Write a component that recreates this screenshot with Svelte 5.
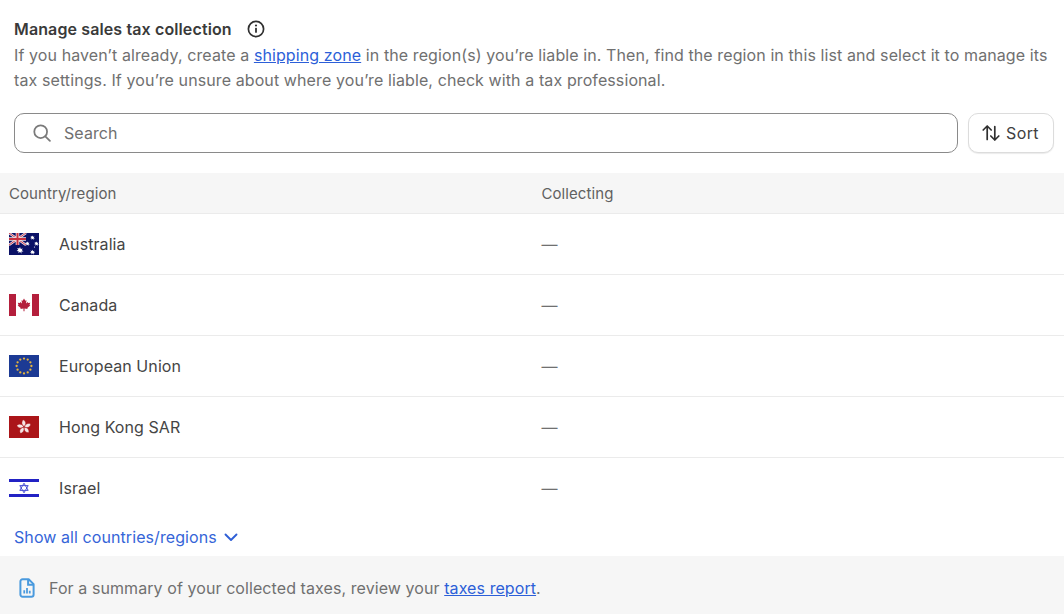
<script lang="ts">
    const regions = ["Australia", "Canada", "European Union", "Hong Kong SAR", "Israel"];
    // 12 stars on the EU circle
    const euStars = Array.from({ length: 12 }, (_, i) => ({
        x: 15 + 7.4 * Math.sin((i * Math.PI) / 6),
        y: 11 - 7.4 * Math.cos((i * Math.PI) / 6),
    }));
    const petals = [0, 72, 144, 216, 288];
    const star = "M0-2.6l.7 1.7 1.8-.5-1 1.5 1.5 1.1-1.8.2.1 1.8L0 1.5l-1.3 1.3.1-1.8-1.8-.2 1.5-1.1-1-1.5 1.8.5z";
    const auStars = [
        { x: 11, y: 17, s: 1.15 },
        { x: 23.5, y: 4.5, s: 0.8 },
        { x: 18.5, y: 10.5, s: 0.75 },
        { x: 27.5, y: 10.5, s: 0.8 },
        { x: 23.5, y: 19, s: 0.85 },
    ];
</script>

<main class="page">
    <section class="intro">
        <div class="title">
            <h2>Manage sales tax collection</h2>
            <svg class="info" viewBox="0 0 18 18" width="18" height="18" aria-hidden="true">
                <circle cx="9" cy="9" r="7.6" fill="none" stroke="#303030" stroke-width="1.7" />
                <rect x="8.1" y="7.8" width="1.8" height="5" rx="0.6" fill="#303030" />
                <circle cx="9" cy="5.5" r="1.1" fill="#303030" />
            </svg>
        </div>
        <p>
            If you haven’t already, create a <a href="#zone">shipping zone</a> in the region(s) you’re liable in. Then, find the region in this list and select it to manage its tax settings. If you’re unsure about where you’re liable, check with a tax professional.
        </p>
    </section>

    <div class="tools">
        <label class="search">
            <svg viewBox="0 0 20 20" width="22" height="22" aria-hidden="true">
                <circle cx="8.8" cy="8.8" r="5.8" fill="none" stroke="#7a7a7a" stroke-width="1.6" />
                <path d="M13 13l4.2 4.2" stroke="#7a7a7a" stroke-width="1.6" stroke-linecap="round" />
            </svg>
            <span>Search</span>
        </label>
        <button class="sort">
            <svg viewBox="0 0 20 20" width="20" height="20" aria-hidden="true">
                <path d="M6.2 16.5V3M2.2 7l4-4 4 4M13.8 3.5V17M9.8 13l4 4 4-4" fill="none" stroke="#303030" stroke-width="1.7" stroke-linecap="round" stroke-linejoin="round" />
            </svg>
            Sort
        </button>
    </div>

    <div class="table">
        <div class="row head">
            <span>Country/region</span>
            <span>Collecting</span>
        </div>
        {#each regions as region, i}
            <div class="row">
                <span class="region">
                    <svg class="flag" viewBox="0 0 30 22" width="30" height="22" aria-hidden="true">
                        {#if i === 0}
                            <rect width="30" height="22" fill="#0a1166" />
                            <path d="M0 0l17 12M17 0L0 12" stroke="#e8dfe6" stroke-width="2.4" />
                            <path d="M0 0l17 12M17 0L0 12" stroke="#c8303f" stroke-width="0.9" />
                            <path d="M8.5 0v12M0 6h17" stroke="#f2e6e8" stroke-width="3.6" />
                            <path d="M8.5 0v12M0 6h17" stroke="#c8303f" stroke-width="2" />
                            {#each auStars as s}
                                <path d={star} fill="#fff" transform="translate({s.x} {s.y}) scale({s.s})" />
                            {/each}
                            <circle cx="25.5" cy="14" r="0.6" fill="#fff" />
                        {:else if i === 1}
                            <rect width="30" height="22" fill="#fff" />
                            <rect width="7" height="22" fill="#b41f3c" />
                            <rect x="23" width="7" height="22" fill="#b41f3c" />
                            <path d="M15 4.5l1.3 2.2 1.2-.5-.5 3.3 1.7-1.6.5 1.2 2-.3-.7 2.1.8.5-3 2.5.3 1.1-3.1-.4v2.6h-1v-2.6l-3.1.4.3-1.1-3-2.5.8-.5-.7-2.1 2 .3.5-1.2 1.7 1.6-.5-3.3 1.2.5z" fill="#b41f3c" />
                        {:else if i === 2}
                            <rect width="30" height="22" fill="#1c3a94" />
                            {#each euStars as s}
                                <circle cx={s.x} cy={s.y} r="1.15" fill="#e8b53c" />
                            {/each}
                        {:else if i === 3}
                            <rect width="30" height="22" fill="#ab1519" />
                            {#each petals as a}
                                <path d="M15.3 10.4c-2.6-1-3.2-4.2-1.2-6.6 2.4.8 3.6 3.8 1.2 6.6z" fill="#f6e6e6" stroke="#ab1519" stroke-width="0.4" transform="rotate({a} 15 11)" />
                            {/each}
                        {:else}
                            <rect width="30" height="22" fill="#fff" />
                            <rect y="2" width="30" height="3" fill="#2222c4" />
                            <rect y="17" width="30" height="3" fill="#2222c4" />
                            <path d="M15 6.2l4.2 7.2h-8.4zM15 15.8l-4.2-7.2h8.4z" fill="none" stroke="#4a52d4" stroke-width="1" />
                        {/if}
                    </svg>
                    {region}
                </span>
                <span class="dash">—</span>
            </div>
        {/each}
    </div>

    <div class="more">
        <a href="#all">Show all countries/regions</a>
        <svg viewBox="0 0 16 16" width="16" height="16" aria-hidden="true">
            <path d="M2.5 5.5l5.5 5.5 5.5-5.5" fill="none" stroke="#2f5fd6" stroke-width="1.9" stroke-linecap="round" stroke-linejoin="round" />
        </svg>
    </div>

    <footer class="note">
        <svg viewBox="0 0 20 20" width="22" height="22" aria-hidden="true">
            <path d="M4 4a2 2 0 0 1 2-2h5.5L16 6.5V16a2 2 0 0 1-2 2H6a2 2 0 0 1-2-2z" fill="none" stroke="#4a9ade" stroke-width="1.8" stroke-linejoin="round" />
            <path d="M11 2.5V7h4.5" fill="none" stroke="#4a9ade" stroke-width="1.8" />
            <path d="M7.5 12v3M10 10v5M12.5 12.5V15" stroke="#4a9ade" stroke-width="1.6" />
        </svg>
        <span>For a summary of your collected taxes, review your <a href="#report">taxes report</a>.</span>
    </footer>
</main>

<style>
    :global(body) {
        margin: 0;
        background: #fff;
    }

    .page {
        width: 1064px;
        height: 614px;
        overflow: hidden;
        font-family: Inter, "Liberation Sans", sans-serif;
        font-size: 16px;
        letter-spacing: 0.08px;
        color: #303030;
    }

    .intro {
        padding: 17px 14px 0;
    }

    .title {
        display: flex;
        align-items: center;
        gap: 15px;
        height: 24px;
        margin-bottom: 2px;
    }

    h2 {
        margin: 0;
        font-size: 16px;
        font-weight: 600;
        letter-spacing: 0.12px;
        color: #3a3a3a;
    }

    .info {
        flex: none;
    }

    p {
        margin: 0;
        line-height: 25px;
        letter-spacing: 0.1px;
        color: #707070;
    }

    a {
        color: #2c5fd8;
    }

    .tools {
        display: flex;
        gap: 10px;
        padding: 20px 10px 0 14px;
    }

    .search {
        flex: 1;
        display: flex;
        align-items: center;
        gap: 11px;
        height: 40px;
        box-sizing: border-box;
        padding-left: 16px;
        border: 1px solid #8a8a8a;
        border-radius: 10px;
        color: #707070;
    }

    .sort {
        display: flex;
        align-items: center;
        justify-content: center;
        gap: 5px;
        width: 86px;
        height: 40px;
        padding: 0 2px 0 0;
        border: 1px solid #dcdcdc;
        border-radius: 10px;
        background: #fff;
        box-shadow: 0 1px 1px rgba(0, 0, 0, 0.08);
        font: inherit;
        letter-spacing: 0.4px;
        color: #404040;
    }

    .table {
        margin-top: 20px;
    }

    .row {
        display: grid;
        grid-template-columns: 532.5px 1fr;
        align-items: center;
        height: 61px;
        box-sizing: border-box;
        padding-left: 9px;
        border-bottom: 1px solid #ebebeb;
    }

    .row:last-child {
        height: 60px;
        border-bottom: none;
    }

    .head {
        height: 41px;
        background: #f6f6f6;
        font-size: 15px;
        font-weight: 430;
        color: #616161;
    }

    .region {
        display: flex;
        align-items: center;
        gap: 20px;
        color: #454545;
    }

    .dash {
        color: #707070;
    }

    .more {
        display: flex;
        align-items: center;
        gap: 6px;
        height: 38px;
        padding-left: 14px;
    }

    .more a {
        color: #3565d8;
        text-decoration: none;
    }

    .note {
        display: flex;
        align-items: center;
        gap: 11px;
        height: 58px;
        box-sizing: border-box;
        padding: 6px 0 0 16px;
        background: #f6f6f6;
        color: #707070;
    }
</style>
